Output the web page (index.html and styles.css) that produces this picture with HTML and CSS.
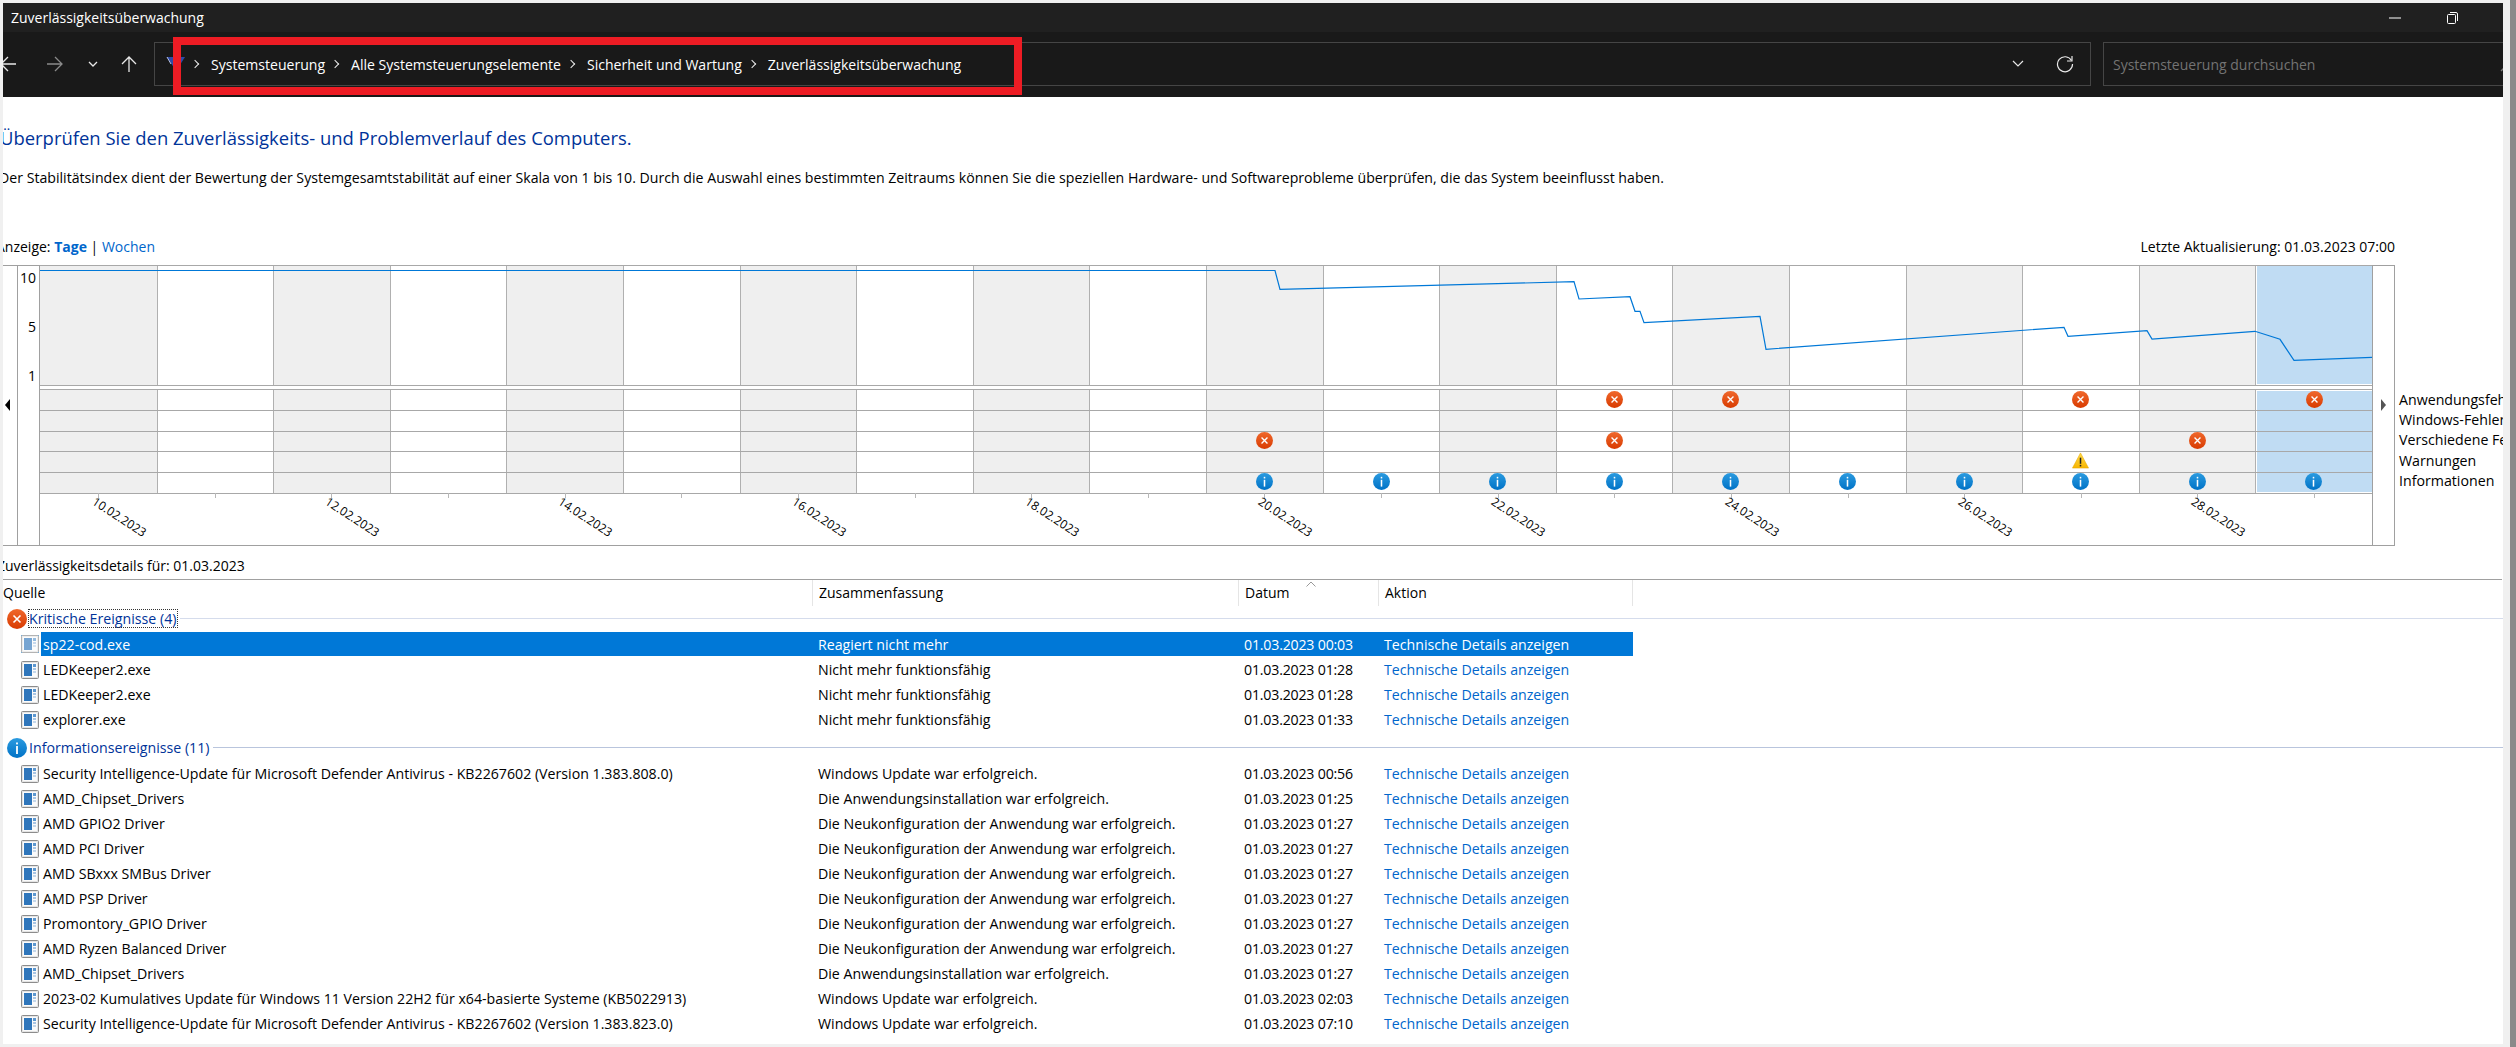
FILE: index.html
```html
<!DOCTYPE html>
<html lang="de">
<head>
<meta charset="utf-8">
<title>Zuverlässigkeitsüberwachung</title>
<link rel="stylesheet" href="styles.css">
</head>
<body>
<svg class="defs" width="0" height="0">
  <defs>
    <linearGradient id="gErr" x1="0" y1="0" x2="0" y2="1"><stop offset="0" stop-color="#f0682c"/><stop offset="1" stop-color="#d83b01"/></linearGradient>
    <linearGradient id="gInf" x1="0" y1="0" x2="0" y2="1"><stop offset="0" stop-color="#2b9be0"/><stop offset="1" stop-color="#0072c6"/></linearGradient>
    <linearGradient id="gWarn" x1="0" y1="0" x2="0" y2="1"><stop offset="0" stop-color="#ffdc4a"/><stop offset="1" stop-color="#f7b500"/></linearGradient>
    <symbol id="err" viewBox="0 0 20 20"><circle cx="10" cy="10" r="10" fill="url(#gErr)"/><path d="M6.5 6.500l7 7M13.500 6.500l-7 7" stroke="#fff" stroke-width="1.6" fill="none"/></symbol>
    <symbol id="inf" viewBox="0 0 20 20"><circle cx="10" cy="10" r="10" fill="url(#gInf)"/><rect x="9.100" y="8" width="1.800" height="8" fill="#fff"/><rect x="9.100" y="4.500" width="1.800" height="1.900" fill="#fff"/></symbol>
    <symbol id="warn" viewBox="0 0 18 18"><path d="M9 1L17.500 17H.5z" fill="url(#gWarn)" stroke="#e9a800" stroke-width=".6"/><rect x="8.200" y="6" width="1.600" height="6.500" fill="#222"/><rect x="8.200" y="13.600" width="1.600" height="1.700" fill="#222"/></symbol>
    <symbol id="app" viewBox="0 0 18 18"><rect x=".5" y=".5" width="17" height="17" rx="1" fill="#e4e4e4" stroke="#8c8c8c"/><rect x="2" y="2" width="14" height="14" fill="#fbfbfb"/><rect x="3" y="3" width="8" height="12" fill="#2f76bb"/><rect x="12" y="3" width="3" height="3" fill="#5c97d0"/><rect x="12" y="7" width="3" height="2" fill="#a9c6e4"/><rect x="12" y="10" width="3" height="2" fill="#c4d7ea"/></symbol>
  </defs>
</svg>
<div class="window">
  <header class="titlebar">
    <span class="title">Zuverlässigkeitsüberwachung</span>
    <div class="winbtns">
      <svg class="winbtn" width="14" height="14" viewBox="0 0 14 14"><path d="M1 7h12" stroke="#fff" fill="none"/></svg>
      <svg class="winbtn" width="14" height="14" viewBox="0 0 14 14"><rect x="2.500" y="3.500" width="8" height="9" rx="1" fill="none" stroke="#fff"/><path d="M5 1.500h6a1.500 1.500 0 0 1 1.500 1.500v7" fill="none" stroke="#fff"/></svg>
    </div>
  </header>
  <nav class="toolbar">
    <div class="navbtns">
      <svg class="nav-back" width="17" height="16" viewBox="0 0 17 16"><path d="M16 8H1M8 1L1 8l7 7" fill="none" stroke="#e8e8e8" stroke-width="1.300"/></svg>
      <svg class="nav-fwd" width="17" height="16" viewBox="0 0 17 16"><path d="M1 8h15M9 1l7 7-7 7" fill="none" stroke="#8a8a8a" stroke-width="1.300"/></svg>
      <svg class="nav-down" width="10" height="7" viewBox="0 0 10 7"><path d="M1 1l4 4 4-4" fill="none" stroke="#e8e8e8" stroke-width="1.300"/></svg>
      <svg class="nav-up" width="16" height="17" viewBox="0 0 16 17"><path d="M8 16V1M1 8l7-7 7 7" fill="none" stroke="#e8e8e8" stroke-width="1.300"/></svg>
    </div>
    <div class="address">
      <svg class="cp-icon" width="20" height="16" viewBox="0 0 20 16"><path d="M1 1l9 14L19 1z" fill="#2f4aa8"/><path d="M7 1l3 11 3-11z" fill="#27335f"/><path d="M1 1l4 7" stroke="#b8c4e6" fill="none"/></svg>
      <ol class="crumbs">
        <li class="crumb">Systemsteuerung</li>
        <li class="crumb">Alle Systemsteuerungselemente</li>
        <li class="crumb">Sicherheit und Wartung</li>
        <li class="crumb">Zuverlässigkeitsüberwachung</li>
      </ol>
      <svg class="addr-down" width="12" height="8" viewBox="0 0 12 8"><path d="M1 1l5 5 5-5" fill="none" stroke="#e8e8e8" stroke-width="1.200"/></svg>
      <svg class="refresh" width="18" height="18" viewBox="0 0 18 18"><path d="M15.500 5.500A7.500 7.500 0 1 0 16.500 9" fill="none" stroke="#e8e8e8" stroke-width="1.200"/><path d="M16 1v5h-5" fill="none" stroke="#e8e8e8" stroke-width="1.200"/></svg>
    </div>
    <div class="search">
      <span>Systemsteuerung durchsuchen</span>
      <svg class="glass" width="16" height="16" viewBox="0 0 16 16"><circle cx="10" cy="6" r="5" fill="none" stroke="#777" stroke-width="1.300"/><path d="M6 10l-5 5" stroke="#777" stroke-width="1.300"/></svg>
    </div>
    <div class="annotation"></div>
  </nav>
  <main class="content">
    <h1 class="heading">Überprüfen Sie den Zuverlässigkeits- und Problemverlauf des Computers.</h1>
    <p class="intro">Der Stabilitätsindex dient der Bewertung der Systemgesamtstabilität auf einer Skala von 1 bis 10. Durch die Auswahl eines bestimmten Zeitraums können Sie die speziellen Hardware- und Softwareprobleme überprüfen, die das System beeinflusst haben.</p>
    <div class="viewbar">
      <span class="view-left">Anzeige: <a class="lnk strong">Tage</a> | <a class="lnk">Wochen</a></span>
      <span class="updated">Letzte Aktualisierung: 01.03.2023 07:00</span>
    </div>
    <section class="chart-row">
      <div class="chart">
        <div class="pane-left"><i class="tri-left"></i></div>
        <div class="scale"><span>10</span><span>5</span><span>1</span></div>
        <svg class="plot" width="2332" height="279" viewBox="0 0 2332 279">
          <g class="shade">
            <rect x="0" y="0" width="117" height="120"/><rect x="233" y="0" width="117" height="120"/><rect x="466" y="0" width="117" height="120"/><rect x="700" y="0" width="116" height="120"/><rect x="933" y="0" width="116" height="120"/><rect x="1166" y="0" width="117" height="120"/><rect x="1399" y="0" width="117" height="120"/><rect x="1632" y="0" width="117" height="120"/><rect x="1866" y="0" width="116" height="120"/><rect x="2099" y="0" width="116" height="120"/>
            <rect x="0" y="124" width="117" height="104"/><rect x="233" y="124" width="117" height="104"/><rect x="466" y="124" width="117" height="104"/><rect x="700" y="124" width="116" height="104"/><rect x="933" y="124" width="116" height="104"/><rect x="1166" y="124" width="117" height="104"/><rect x="1399" y="124" width="117" height="104"/><rect x="1632" y="124" width="117" height="104"/><rect x="1866" y="124" width="116" height="104"/><rect x="2099" y="124" width="116" height="104"/>
          </g>
          <g class="selected"><rect x="2217" y="1" width="115" height="118"/><rect x="2217" y="126" width="115" height="101"/></g>
          <path class="vlines" d="M117.500 0V120M233.500 0V120M350.500 0V120M466.500 0V120M583.500 0V120M700.500 0V120M816.500 0V120M933.500 0V120M1049.500 0V120M1166.500 0V120M1283.500 0V120M1399.500 0V120M1516.500 0V120M1632.500 0V120M1749.500 0V120M1866.500 0V120M1982.500 0V120M2099.500 0V120M2215.500 0V120M117.500 124V228M233.500 124V228M350.500 124V228M466.500 124V228M583.500 124V228M700.500 124V228M816.500 124V228M933.500 124V228M1049.500 124V228M1166.500 124V228M1283.500 124V228M1399.500 124V228M1516.500 124V228M1632.500 124V228M1749.500 124V228M1866.500 124V228M1982.500 124V228M2099.500 124V228M2215.500 124V228"/>
          <path class="hlines" d="M0 .5H2332M0 120.500H2332M0 124.500H2332M0 145.500H2332M0 166.500H2332M0 186.500H2332M0 207.500H2332M0 228.500H2332"/>
          <path class="ticks" d="M58.500 228v5M175.500 228v5M291.500 228v5M408.500 228v5M525.500 228v5M641.500 228v5M758.500 228v5M875.500 228v5M991.500 228v5M1108.500 228v5M1224.500 228v5M1341.500 228v5M1458.500 228v5M1574.500 228v5M1691.500 228v5M1808.500 228v5M1924.500 228v5M2041.500 228v5M2157.500 228v5M2274.500 228v5"/>
          <polyline class="trend" points="0,5.500 1235,5.500 1240,24.300 1534,16.700 1539,34 1590,31.700 1595,46.300 1600,46.300 1604,57.700 1720,51.300 1726,84.300 2024,62.300 2028,71.300 2107,65.700 2112,74 2215,66.300 2240,74.300 2254,95.300 2332,92.300"/>
          <use href="#err" x="1566" y="126" width="17" height="17"/><use href="#err" x="1682" y="126" width="17" height="17"/><use href="#err" x="2032" y="126" width="17" height="17"/><use href="#err" x="2266" y="126" width="17" height="17"/>
          <use href="#err" x="1216" y="167" width="17" height="17"/><use href="#err" x="1566" y="167" width="17" height="17"/><use href="#err" x="2149" y="167" width="17" height="17"/>
          <use href="#warn" x="2032" y="187" width="17" height="17"/>
          <use href="#inf" x="1216" y="208" width="17" height="17"/><use href="#inf" x="1333" y="208" width="17" height="17"/><use href="#inf" x="1449" y="208" width="17" height="17"/><use href="#inf" x="1566" y="208" width="17" height="17"/><use href="#inf" x="1682" y="208" width="17" height="17"/><use href="#inf" x="1799" y="208" width="17" height="17"/><use href="#inf" x="1916" y="208" width="17" height="17"/><use href="#inf" x="2032" y="208" width="17" height="17"/><use href="#inf" x="2149" y="208" width="17" height="17"/><use href="#inf" x="2265" y="208" width="17" height="17"/>
          <g class="dates">
            <text transform="translate(77 255.500) rotate(33)">10.02.2023</text>
            <text transform="translate(310 255.500) rotate(33)">12.02.2023</text>
            <text transform="translate(543 255.500) rotate(33)">14.02.2023</text>
            <text transform="translate(777 255.500) rotate(33)">16.02.2023</text>
            <text transform="translate(1010 255.500) rotate(33)">18.02.2023</text>
            <text transform="translate(1243 255.500) rotate(33)">20.02.2023</text>
            <text transform="translate(1476 255.500) rotate(33)">22.02.2023</text>
            <text transform="translate(1710 255.500) rotate(33)">24.02.2023</text>
            <text transform="translate(1943 255.500) rotate(33)">26.02.2023</text>
            <text transform="translate(2176 255.500) rotate(33)">28.02.2023</text>
          </g>
        </svg>
        <div class="pane-right"><i class="tri-right"></i></div>
      </div>
      <ul class="legend">
        <li>Anwendungsfehler</li><li>Windows-Fehler</li><li>Verschiedene Fehler</li><li>Warnungen</li><li>Informationen</li>
      </ul>
    </section>
    <div class="details-label">Zuverlässigkeitsdetails für: 01.03.2023</div>
    <section class="details">
      <div class="colhead">
        <div class="hcell">Quelle</div>
        <div class="hcell sep">Zusammenfassung</div>
        <div class="hcell sep">Datum<svg class="sort" width="10" height="6" viewBox="0 0 10 6"><path d="M.5 5.500L5 1l4.500 4.500" fill="none" stroke="#999"/></svg></div>
        <div class="hcell sep endsep">Aktion</div>
      </div>
      <div class="group first">
        <svg class="gicon" width="20" height="20"><use href="#err"/></svg>
        <span class="glabel focus">Kritische Ereignisse (4)</span><span class="gline"></span>
      </div>
      <div class="row selected-row"><svg class="appicon" width="18" height="18"><use href="#app"/></svg><div class="cells"><span>sp22-cod.exe</span><span>Reagiert nicht mehr</span><span>01.03.2023 00:03</span><a>Technische Details anzeigen</a></div></div>
      <div class="row"><svg class="appicon" width="18" height="18"><use href="#app"/></svg><div class="cells"><span>LEDKeeper2.exe</span><span>Nicht mehr funktionsfähig</span><span>01.03.2023 01:28</span><a>Technische Details anzeigen</a></div></div>
      <div class="row"><svg class="appicon" width="18" height="18"><use href="#app"/></svg><div class="cells"><span>LEDKeeper2.exe</span><span>Nicht mehr funktionsfähig</span><span>01.03.2023 01:28</span><a>Technische Details anzeigen</a></div></div>
      <div class="row"><svg class="appicon" width="18" height="18"><use href="#app"/></svg><div class="cells"><span>explorer.exe</span><span>Nicht mehr funktionsfähig</span><span>01.03.2023 01:33</span><a>Technische Details anzeigen</a></div></div>
      <div class="group second">
        <svg class="gicon" width="20" height="20"><use href="#inf"/></svg>
        <span class="glabel">Informationsereignisse (11)</span><span class="gline dark"></span>
      </div>
      <div class="row"><svg class="appicon" width="18" height="18"><use href="#app"/></svg><div class="cells"><span>Security Intelligence-Update für Microsoft Defender Antivirus - KB2267602 (Version 1.383.808.0)</span><span>Windows Update war erfolgreich.</span><span>01.03.2023 00:56</span><a>Technische Details anzeigen</a></div></div>
      <div class="row"><svg class="appicon" width="18" height="18"><use href="#app"/></svg><div class="cells"><span>AMD_Chipset_Drivers</span><span>Die Anwendungsinstallation war erfolgreich.</span><span>01.03.2023 01:25</span><a>Technische Details anzeigen</a></div></div>
      <div class="row"><svg class="appicon" width="18" height="18"><use href="#app"/></svg><div class="cells"><span>AMD GPIO2 Driver</span><span>Die Neukonfiguration der Anwendung war erfolgreich.</span><span>01.03.2023 01:27</span><a>Technische Details anzeigen</a></div></div>
      <div class="row"><svg class="appicon" width="18" height="18"><use href="#app"/></svg><div class="cells"><span>AMD PCI Driver</span><span>Die Neukonfiguration der Anwendung war erfolgreich.</span><span>01.03.2023 01:27</span><a>Technische Details anzeigen</a></div></div>
      <div class="row"><svg class="appicon" width="18" height="18"><use href="#app"/></svg><div class="cells"><span>AMD SBxxx SMBus Driver</span><span>Die Neukonfiguration der Anwendung war erfolgreich.</span><span>01.03.2023 01:27</span><a>Technische Details anzeigen</a></div></div>
      <div class="row"><svg class="appicon" width="18" height="18"><use href="#app"/></svg><div class="cells"><span>AMD PSP Driver</span><span>Die Neukonfiguration der Anwendung war erfolgreich.</span><span>01.03.2023 01:27</span><a>Technische Details anzeigen</a></div></div>
      <div class="row"><svg class="appicon" width="18" height="18"><use href="#app"/></svg><div class="cells"><span>Promontory_GPIO Driver</span><span>Die Neukonfiguration der Anwendung war erfolgreich.</span><span>01.03.2023 01:27</span><a>Technische Details anzeigen</a></div></div>
      <div class="row"><svg class="appicon" width="18" height="18"><use href="#app"/></svg><div class="cells"><span>AMD Ryzen Balanced Driver</span><span>Die Neukonfiguration der Anwendung war erfolgreich.</span><span>01.03.2023 01:27</span><a>Technische Details anzeigen</a></div></div>
      <div class="row"><svg class="appicon" width="18" height="18"><use href="#app"/></svg><div class="cells"><span>AMD_Chipset_Drivers</span><span>Die Anwendungsinstallation war erfolgreich.</span><span>01.03.2023 01:27</span><a>Technische Details anzeigen</a></div></div>
      <div class="row"><svg class="appicon" width="18" height="18"><use href="#app"/></svg><div class="cells"><span>2023-02 Kumulatives Update für Windows 11 Version 22H2 für x64-basierte Systeme (KB5022913)</span><span>Windows Update war erfolgreich.</span><span>01.03.2023 02:03</span><a>Technische Details anzeigen</a></div></div>
      <div class="row"><svg class="appicon" width="18" height="18"><use href="#app"/></svg><div class="cells"><span>Security Intelligence-Update für Microsoft Defender Antivirus - KB2267602 (Version 1.383.823.0)</span><span>Windows Update war erfolgreich.</span><span>01.03.2023 07:10</span><a>Technische Details anzeigen</a></div></div>
    </section>
  </main>
</div>
<div class="edge"></div>
</body>
</html>
```
FILE: styles.css
```css
* { box-sizing: border-box; }
html, body { margin: 0; height: 1047px; overflow: hidden; }
body {
  display: flex;
  background: #f0f0f0;
  font-family: "Open Sans", "Noto Sans", sans-serif;
  font-size: 14px;
  color: #000;
}
.defs { position: absolute; }
.window {
  width: 2500px;
  height: 1041px;
  margin: 3px 7px 0 3px;
  background: #fff;
  overflow: hidden;
  display: flex;
  flex-direction: column;
}
.edge { width: 6px; background: #8a8a8a; }
.titlebar {
  height: 29px;
  flex: none;
  background: #202020;
  color: #fff;
  display: flex;
  align-items: center;
  padding-left: 8px;
  font-size: 14px;
}
.title { flex: 1; }
.winbtns { display: flex; gap: 43px; margin-right: 44px; }
.toolbar {
  position: relative;
  height: 65px;
  flex: none;
  background: #191919;
  display: flex;
  padding: 10px 0 11px;
  color: #fff;
}
.navbtns { width: 151px; flex: none; display: flex; align-items: center; }
.nav-back { margin-left: -3px; }
.nav-fwd { margin-left: 29px; }
.nav-down { margin-left: 25px; }
.nav-up { margin-left: 23px; }
.address {
  width: 1937px;
  flex: none;
  border: 1px solid #454545;
  display: flex;
  align-items: center;
  padding-left: 11px;
}
.cp-icon { flex: none; }
.crumbs {
  list-style: none;
  margin: 0 0 0 6px;
  padding: 0;
  flex: 1;
  display: flex;
  gap: 7px;
  font-size: 14.050px;
}
.crumb { display: flex; align-items: center; }
.crumb::before {
  content: "";
  width: 5px;
  height: 5px;
  border-top: 1px solid #eee;
  border-right: 1px solid #eee;
  transform: rotate(45deg);
  margin-right: 13px;
}
.addr-down { margin-right: 32px; }
.refresh { margin-right: 16px; }
.search {
  flex: 1;
  margin-left: 12px;
  border: 1px solid #454545;
  border-right: 0;
  display: flex;
  align-items: center;
  justify-content: space-between;
  padding-left: 9px;
  color: #737373;
}
.glass { margin-right: -13px; }
.annotation {
  position: absolute;
  left: 170px;
  top: 5px;
  width: 849px;
  height: 58px;
  border: 8px solid #ed1c24;
}
.content { flex: 1; margin-left: -1px; min-height: 0; }
.heading {
  margin: 0 0 0 -2px;
  padding-top: 27px;
  height: 58px;
  font-size: 18.450px;
  font-weight: 400;
  line-height: 28px;
  color: #003399;
  white-space: nowrap;
}
.intro {
  margin: 0 0 0 -3px;
  padding-top: 13px;
  height: 66px;
  line-height: 20px;
  font-size: 14.150px;
  white-space: nowrap;
}
.viewbar {
  display: flex;
  justify-content: space-between;
  width: 2393px;
  height: 44px;
  padding-top: 16px;
  line-height: 20px;
}
.view-left { margin-left: -6px; }
.lnk { color: #0066cc; }
.strong { font-weight: 700; }
.chart-row { display: flex; margin-left: 1px; height: 281px; }
.chart {
  width: 2392px;
  flex: none;
  display: flex;
  border-top: 1px solid #a0a0a0;
  border-bottom: 1px solid #a0a0a0;
  border-right: 1px solid #a0a0a0;
}
.pane-left {
  width: 15px;
  flex: none;
  border-right: 1px solid #a0a0a0;
  padding: 133px 0 0 2px;
}
.tri-left {
  display: block;
  width: 0;
  height: 0;
  border: 6px solid transparent;
  border-left: 0;
  border-right: 5px solid #000;
}
.scale {
  width: 22px;
  flex: none;
  display: flex;
  flex-direction: column;
  align-items: flex-end;
  padding: 2px 3px 0 0;
  line-height: 20px;
  row-gap: 29px;
  border-right: 1px solid #a0a0a0;
}
.plot { flex: none; display: block; margin-top: -1px; }
.pane-right {
  flex: 1;
  border-left: 1px solid #a0a0a0;
  padding: 133px 0 0 8px;
}
.tri-right {
  display: block;
  width: 0;
  height: 0;
  border: 6px solid transparent;
  border-right: 0;
  border-left: 5px solid #555;
}
.shade { fill: #efefef; }
.selected { fill: #c0dcf3; }
.vlines { stroke: #b0b0b0; fill: none; }
.hlines { stroke: #a8a8a8; fill: none; }
.ticks { stroke: #b8b8b8; fill: none; }
.trend { fill: none; stroke: #0078d7; stroke-width: 1.200; }
.dates { font-size: 12px; text-anchor: middle; fill: #000; }
.legend {
  list-style: none;
  margin: 125px 0 0 4px;
  padding: 0;
  white-space: nowrap;
  line-height: 20.200px;
  font-size: 14.200px;
}
.details-label { height: 33px; padding-top: 10px; line-height: 20px; margin-left: -5px; white-space: nowrap; }
.colhead {
  display: grid;
  grid-template-columns: 809px 426px 140px 255px;
  height: 27px;
  border-top: 1px solid #a0a0a0;
  line-height: 26px;
  margin-left: 1px;
  width: 2499px;
}
.hcell { position: relative; }
.sep { border-left: 1px solid #e5e5e5; padding-left: 6px; }
.endsep { border-right: 1px solid #e5e5e5; }
.sort { position: absolute; left: 67px; top: 1px; }
.group { display: flex; align-items: center; margin-left: 5px; }
.group.first { height: 25px; margin-bottom: 1px; }
.group.second { height: 27px; margin-top: 2px; }
.gicon { flex: none; }
.glabel { color: #003399; padding: 0 1px; white-space: nowrap; margin-left: 1px; font-size: 14.200px; }
.glabel.focus { outline: 1px dotted #333; outline-offset: -1px; }
.gline { flex: 1; height: 1px; background: #d5dcec; margin-left: 2px; }
.gline.dark { background: #b9c5dd; }
.row { display: flex; align-items: center; height: 25px; padding-left: 18px; }
.appicon { flex: none; margin: 0 2px 0 1px; }
.cells {
  display: grid;
  grid-template-columns: 771px 426px 140px 255px;
  height: 25px;
  line-height: 25px;
  white-space: nowrap;
  font-size: 14.180px;
}
.cells span:first-child { padding-left: 2px; }
.cells > :not(:first-child) { padding-left: 6px; }
.cells span:nth-child(3) { letter-spacing: -.2px; }
.cells a { color: #0066cc; }
.selected-row { align-items: flex-start; }
.selected-row .cells { background: #0078d7; color: #fff; height: 24px; line-height: 25px; }
.selected-row .cells a { color: #fff; }
.selected-row .appicon { opacity: .65; margin-top: 3px; background: #0078d7; }
```
